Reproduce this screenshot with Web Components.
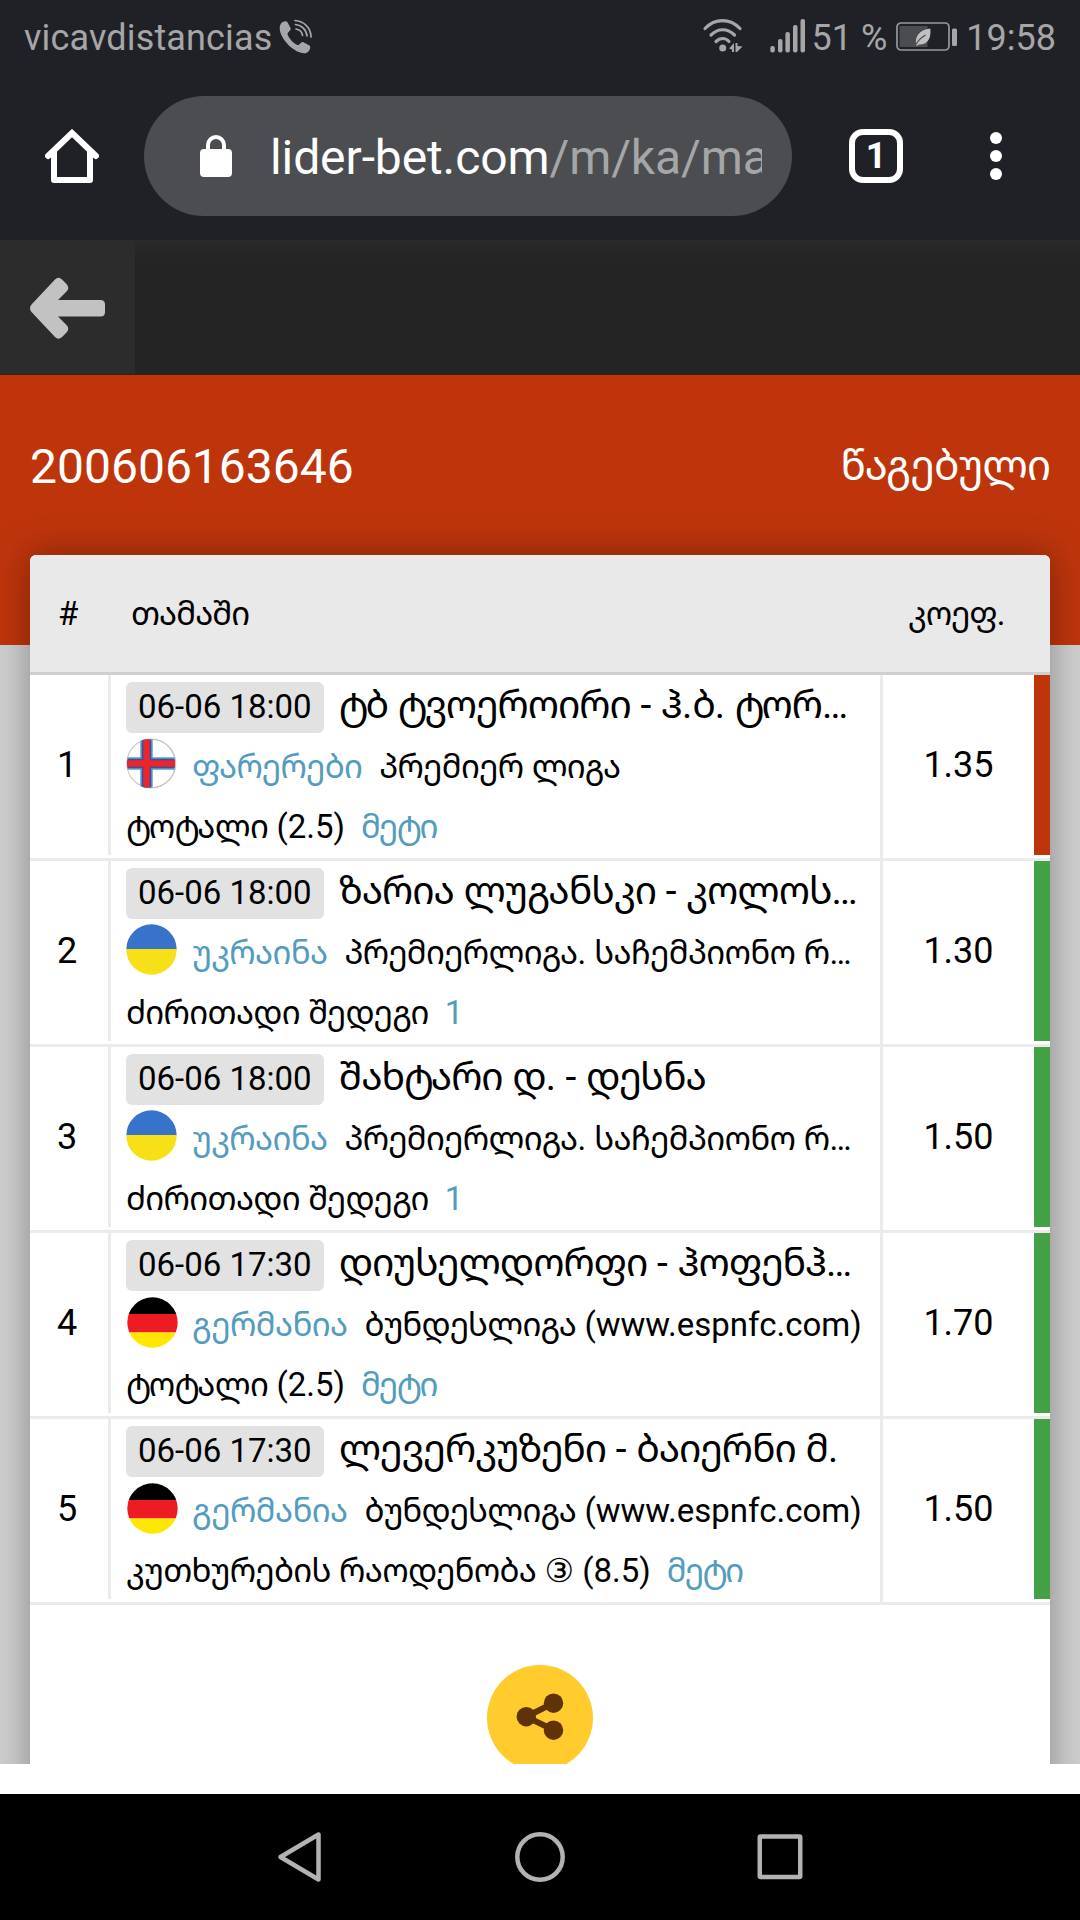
<!DOCTYPE html>
<html lang="ka">
<head>
  <meta charset="utf-8">
  <title>200606163646</title>
  <style>
    html, body {
      margin: 0;
      padding: 0;
    }

    body {
      background: #ffffff;
      color: #000000;
      display: flex;
      flex-direction: column;
      font-family: Roboto, 'Noto Sans Georgian', 'DejaVu Sans', sans-serif;
      font-size: 33px;
      height: 1920px;
      overflow: hidden;
      width: 1080px;
    }
  </style>
</head>
<body>
  <phone-status carrier="vicavdistancias" battery="51 %" time="19:58"></phone-status>
  <browser-bar host="lider-bet.com" path="/m/ka/ma" tabs="1"></browser-bar>
  <bet-page>
    <bet-back></bet-back>
    <bet-banner number="200606163646" status="წაგებული"></bet-banner>
    <bet-card index="#" game="თამაში" odds="კოეფ.">
      <bet-row number="1" time="06-06 18:00" game="ტბ ტვოეროირი - ჰ.ბ. ტორ…" flag="fo" country="ფარერები" league="პრემიერ ლიგა" market="ტოტალი (2.5)" pick="მეტი" odds="1.35" result="lost"></bet-row>
      <bet-row number="2" time="06-06 18:00" game="ზარია ლუგანსკი - კოლოს…" flag="ua" country="უკრაინა" league="პრემიერლიგა. საჩემპიონო რ…" market="ძირითადი შედეგი" pick="1" odds="1.30" result="won"></bet-row>
      <bet-row number="3" time="06-06 18:00" game="შახტარი დ. - დესნა" flag="ua" country="უკრაინა" league="პრემიერლიგა. საჩემპიონო რ…" market="ძირითადი შედეგი" pick="1" odds="1.50" result="won"></bet-row>
      <bet-row number="4" time="06-06 17:30" game="დიუსელდორფი - ჰოფენჰ…" flag="de" country="გერმანია" league="ბუნდესლიგა (www.espnfc.com)" market="ტოტალი (2.5)" pick="მეტი" odds="1.70" result="won"></bet-row>
      <bet-row number="5" time="06-06 17:30" game="ლევერკუზენი - ბაიერნი მ." flag="de" country="გერმანია" league="ბუნდესლიგა (www.espnfc.com)" market="კუთხურების რაოდენობა ③ (8.5)" pick="მეტი" odds="1.50" result="won"></bet-row>
      <bet-share slot="footer"></bet-share>
    </bet-card>
  </bet-page>
  <phone-nav></phone-nav>

  <script>
    // Shared set up
    // Markup goes into an open root, attributes fill the parts
    class BetElement extends HTMLElement {
      constructor( markup ) {
        super();

        const template = document.createElement( 'template' );
        template.innerHTML = `
          <style>
            i {
              font-style: normal;
              letter-spacing: var( --tracking, -0.021em );
            }

            i b {
              font-weight: 400;
              letter-spacing: -0.080em;
            }
          </style>
        ` + markup;

        this.attachShadow( {mode: 'open'} );
        this.shadowRoot.appendChild( template.content.cloneNode( true ) );
      }

      // Georgian runs are set tighter than the Latin ones
      // The wide letter "ტ" tighter still
      connectedCallback() {
        this.shadowRoot.querySelectorAll( '[data-attr]' ).forEach( ( element ) => {
          element.innerHTML = this.getAttribute( element.dataset.attr )
            .replace( /[\u10d0-\u10ff]+/g, '<i>$&</i>' )
            .replace( /ტ/g, '<b>$&</b>' );
        } );
      }
    }

    // Status bar
    class PhoneStatus extends BetElement {
      constructor() {
        super( /* template */ `
          <style>
            :host {
              align-items: flex-start;
              background: #202126;
              box-sizing: border-box;
              color: #a6a6a8;
              display: flex;
              flex: none;
              font-size: 36px;
              height: 84px;
              line-height: 42px;
              padding: 17px 24px 0 24px;
              white-space: pre;
            }

            svg { display: block; flex: none; }
            .carrier { letter-spacing: 0.150px; }
            .phone { margin: 2px 0 0 6px; }
            .wifi { margin: 2px 0 0 auto; }
            .signal { margin: 2px 6px 0 26px; }
            .battery { margin: 4px 8px 0 9px; }
          </style>
          <span class="carrier" data-attr="carrier"></span>
          <svg class="phone" width="36" height="36" viewBox="0 0 36 36">
            <path fill="#a6a6a8" d="M3 4.500 C5 2.500 8 1.500 9.500 3.200 L12.500 9 C13.500 11.500 9.500 13 9.500 15 C10.500 19 15.500 24.500 19.500 26 C22 26.500 22.500 22.500 25 23 L31.500 26.500 C33.500 28.500 31 33 28 34.200 C22 35.500 12 29 7 22 C2.500 16 0 9 3 4.500 Z"/>
            <g fill="none" stroke="#a6a6a8" stroke-width="1.700" stroke-linecap="round">
              <path d="M18 10 C21.500 10.500 24 13 24.500 16.500"/>
              <path d="M17.500 5.500 C23.500 6 28.500 11 29 17"/>
              <path d="M17 1.500 C26 2 33 9 33 18"/>
            </g>
          </svg>
          <svg class="wifi" width="42" height="36" viewBox="0 0 42 36">
            <g fill="none" stroke="#a6a6a8" stroke-width="3.200" stroke-linecap="round">
              <path d="M3 9.500 C13 -1 28 -1 38 9.500"/>
              <path d="M9 16 C16 9 25.500 9 32.500 16"/>
              <path d="M14 22.500 C18 18.500 23.500 18.500 27 22.500"/>
            </g>
            <circle cx="20.700" cy="29" r="3.500" fill="#a6a6a8"/>
            <path fill="#a6a6a8" d="M27 29.500 L32 24 V33 H30 V30.500 Z M33.500 24 H35.500 V27 L40.500 27.500 L35 33 H33.500 Z"/>
          </svg>
          <svg class="signal" width="36" height="36" viewBox="0 0 36 36" fill="#a6a6a8">
            <rect x="0.300" y="27" width="4.500" height="6.500" rx="2"/>
            <rect x="8" y="20" width="4.500" height="13.500" rx="2"/>
            <rect x="15.400" y="13" width="4.500" height="20.500" rx="2"/>
            <rect x="23" y="6" width="4.500" height="27.500" rx="2"/>
            <rect x="30.500" y="0" width="4.500" height="33.500" rx="2"/>
          </svg>
          <span data-attr="battery"></span>
          <svg class="battery" width="62" height="32" viewBox="0 0 62 32">
            <rect x="1" y="2" width="52" height="27" rx="4" fill="none" stroke="#98989a" stroke-width="1.700"/>
            <rect x="3.500" y="5" width="28" height="21" fill="#4b4c50"/>
            <path fill="#c0c0c1" d="M34.300 7.500 C35.500 18 31 24 23 23.500 L20.500 25 C18 16 23 9 34.300 7.500 Z"/>
            <path fill="none" stroke="#4b4c50" stroke-width="1.200" d="M20 23.500 C23 18 26 16 29.500 14"/>
            <rect x="56" y="7.500" width="5" height="17.500" rx="1.500" fill="#a6a6a8"/>
          </svg>
          <span data-attr="time"></span>
        ` );
      }
    }

    // Address bar
    class BrowserBar extends BetElement {
      constructor() {
        super( /* template */ `
          <style>
            :host {
              align-items: center;
              background: #202126;
              box-sizing: border-box;
              color: #ffffff;
              display: flex;
              flex: none;
              height: 156px;
              padding: 0 78px 12px 45px;
            }

            svg { display: block; flex: none; }

            .address {
              align-items: center;
              background: #4c4d50;
              border-radius: 60px;
              box-sizing: border-box;
              display: flex;
              flex: none;
              gap: 38px;
              height: 120px;
              margin: 0 57px 0 45px;
              padding: 0 30px 0 56px;
              width: 648px;
            }

            .url {
              flex: 1;
              font-size: 48px;
              letter-spacing: -0.100px;
              line-height: 60px;
              overflow: hidden;
              padding: 3px 0 0 0;
              white-space: nowrap;
            }

            .path { color: #a5a6a8; }

            .tabs {
              align-items: center;
              border: solid 6px #ffffff;
              border-radius: 14px;
              box-sizing: border-box;
              display: flex;
              flex: none;
              font-size: 36px;
              font-weight: 700;
              height: 54px;
              justify-content: center;
              line-height: 42px;
              margin: 0 87px 0 0;
              width: 54px;
            }
          </style>
          <svg width="54" height="54" viewBox="0 0 54 54" fill="none" stroke="#ffffff" stroke-width="6" stroke-linecap="round" stroke-linejoin="round">
            <path stroke-linejoin="miter" d="M3 27 L27 4 L51 27"/>
            <path d="M9 24 V51 H45 V24"/>
          </svg>
          <div class="address">
            <svg width="32" height="42" viewBox="0 0 32 42">
              <rect x="0" y="14" width="32" height="28" rx="4" fill="#ffffff"/>
              <path d="M8 16 V10 A8 8 0 0 1 24 10 V16" fill="none" stroke="#ffffff" stroke-width="4"/>
            </svg>
            <div class="url"><span data-attr="host"></span><span class="path" data-attr="path"></span></div>
          </div>
          <div class="tabs" data-attr="tabs"></div>
          <svg width="12" height="48" viewBox="0 0 12 48" fill="#ffffff">
            <circle cx="6" cy="6" r="6"/>
            <circle cx="6" cy="24" r="6"/>
            <circle cx="6" cy="42" r="6"/>
          </svg>
        ` );
      }
    }

    // Scrolled content between the two bars
    class BetPage extends BetElement {
      constructor() {
        super( /* template */ `
          <style>
            :host {
              background: #cfcfcf;
              display: flex;
              flex: none;
              flex-direction: column;
              height: 1524px;
              overflow: hidden;
            }
          </style>
          <slot></slot>
        ` );
      }
    }

    class BetBack extends BetElement {
      constructor() {
        super( /* template */ `
          <style>
            :host {
              background: linear-gradient( #292929, #242424 20px );
              border-bottom: solid 1px #3b1d13;
              box-sizing: border-box;
              display: flex;
              flex: none;
              height: 135px;
            }

            div {
              align-items: center;
              background: #2c2c2c;
              display: flex;
              justify-content: center;
              width: 135px;
            }

            svg { display: block; margin: 2px 0 0 0; }
          </style>
          <div>
            <svg width="76" height="62" viewBox="0 0 76 62" fill="#c2c2c2">
              <path d="M1.500 27.500 L25 2.500 Q28.500 -1 32 2.500 L36.500 7 Q40 11 36.500 14.500 L28 23 H70.500 Q75 23 75 27.500 V35 Q75 39.500 70.500 39.500 H28 L36.500 48 Q40 51.500 36.500 55.500 L32 60 Q28.500 63.500 25 60 L1.500 35 Q-1.500 31 1.500 27.500 Z"/>
            </svg>
          </div>
        ` );
      }
    }

    class BetBanner extends BetElement {
      constructor() {
        super( /* template */ `
          <style>
            :host {
              align-items: flex-start;
              background: #be350c;
              box-sizing: border-box;
              color: #ffffff;
              display: flex;
              flex: none;
              font-size: 48px;
              height: 270px;
              justify-content: space-between;
              line-height: 183px;
              padding: 0 30px 0 30px;
            }

            .status {
              font-size: 42px;
              line-height: 181px;
              --tracking: -0.025em;
            }
          </style>
          <span data-attr="number"></span>
          <span class="status" data-attr="status"></span>
        ` );
      }
    }

    class BetCard extends BetElement {
      constructor() {
        super( /* template */ `
          <style>
            :host {
              background: #ffffff;
              border-radius: 6px;
              box-shadow: 0 0 36px rgba( 0, 0, 0, 0.350 );
              display: flex;
              flex: none;
              flex-direction: column;
              height: 1290px;
              margin: -90px 30px 0 30px;
            }

            header {
              background: #e9e9e9;
              border-bottom: solid 3px #cfcfcf;
              border-radius: 6px 6px 0 0;
              display: grid;
              flex: none;
              grid-template-columns: 101px 1fr 171px;
              line-height: 117px;
              --tracking: -0.030em;
            }

            header span:first-child { padding: 0 0 0 28px; }
            header span:last-child { padding: 0 0 0 29px; }

            footer {
              display: flex;
              justify-content: center;
              padding: 60px 0 0 0;
            }
          </style>
          <header><span data-attr="index"></span><span data-attr="game"></span><span data-attr="odds"></span></header>
          <slot></slot>
          <footer><slot name="footer"></slot></footer>
        ` );
      }
    }

    // Round flags
    const FLAGS = {
      fo: `
        <circle cx="25" cy="25.500" r="24.500" fill="#ffffff" stroke="#c4c4c4" stroke-width="1.500"/>
        <path stroke="#5aa0d6" stroke-width="12.500" d="M20.500 1.500 V49.500 M1.500 25.500 H48.500"/>
        <path stroke="#3b4f9a" stroke-width="9.500" d="M20.500 1.500 V49.500 M1.500 25.500 H48.500"/>
        <path stroke="#e8262b" stroke-width="6.500" d="M20.500 1.500 V49.500 M1 25.500 H49"/>`,
      ua: `
        <rect width="51" height="25" fill="#3873cb"/>
        <rect y="25" width="51" height="26" fill="#f7e017"/>`,
      de: `
        <rect width="51" height="17" fill="#000000"/>
        <rect y="17" width="51" height="18.500" fill="#ed1c24"/>
        <rect y="35.500" width="51" height="15.500" fill="#ffe600"/>`
    };

    class BetRow extends BetElement {
      constructor() {
        super( /* template */ `
          <style>
            :host {
              border-bottom: solid 3px #ebebeb;
              display: grid;
              flex: none;
              grid-template-columns: 78px 1fr 154px 16px;
              height: 183px;
              line-height: 60px;
              white-space: nowrap;
            }

            .number,
            .odds {
              font-size: 36px;
              line-height: 180px;
              text-align: center;
            }

            .number { padding: 0 4px 0 0; }

            .match {
              border-left: solid 3px #ebebeb;
              box-sizing: border-box;
              display: grid;
              grid-template-rows: 63px 59px 58px;
              height: 180px;
              min-width: 0;
              padding: 0 0 0 15px;
            }

            .odds {
              border-left: solid 3px #ebebeb;
              height: 183px;
            }

            .strip {
              background: #43a047;
              height: 180px;
            }
            :host( [result=lost] ) .strip { background: #be350c; }

            .line { display: flex; }
            .line:first-child { align-items: baseline; padding: 7px 0 0 0; }
            .line:nth-child( 2 ) { line-height: 57px; }

            .time {
              background: #e2e2e2;
              border-radius: 6px;
              height: 51px;
              line-height: 49px;
              margin: 0 15px 0 0;
              padding: 0 12px 0 12px;
            }

            .game {
              font-size: 39px;
              line-height: 45px;
              --tracking: -0.028em;
            }

            svg {
              display: block;
              flex: none;
              margin: 0 15px 0 0;
            }
            :host( [flag=de] ) svg { transform: translate( 1px, 1px ); }

            .country { margin: 0 17px 0 0; }
            .market { margin: 0 16px 0 0; }

            .country,
            .pick {
              color: #539cbe;
            }

            .pick { --tracking: -0.045em; }
          </style>
          <div class="number" data-attr="number"></div>
          <div class="match">
            <div class="line"><span class="time" data-attr="time"></span><span class="game" data-attr="game"></span></div>
            <div class="line">
              <svg width="51" height="51" viewBox="0 0 51 51">
                <clipPath id="round"><circle cx="25.500" cy="25.500" r="25.200"/></clipPath>
                <g clip-path="url(#round)"></g>
              </svg>
              <span class="country" data-attr="country"></span><span data-attr="league"></span>
            </div>
            <div class="line"><span class="market" data-attr="market"></span><span class="pick" data-attr="pick"></span></div>
          </div>
          <div class="odds" data-attr="odds"></div>
          <div class="strip"></div>
        ` );
      }

      connectedCallback() {
        super.connectedCallback();
        this.shadowRoot.querySelector( 'g' ).innerHTML = FLAGS[this.getAttribute( 'flag' )];
      }
    }

    class BetShare extends BetElement {
      constructor() {
        super( /* template */ `
          <style>
            :host {
              background: #ffcb2d;
              border-radius: 50%;
              display: block;
              height: 106px;
              width: 106px;
            }

            svg { display: block; }
          </style>
          <svg width="106" height="106" viewBox="0 0 106 106" fill="#5f3305">
            <path d="M66.500 38 L39.300 51.700 L66.500 65" fill="none" stroke="#5f3305" stroke-width="6"/>
            <circle cx="39.300" cy="51.700" r="9.700"/>
            <circle cx="66.500" cy="38.200" r="9.700"/>
            <circle cx="66.500" cy="65.200" r="9.700"/>
          </svg>
        ` );
      }
    }

    // Back, home, recents
    class PhoneNav extends BetElement {
      constructor() {
        super( /* template */ `
          <style>
            :host {
              align-items: center;
              background: #000000;
              box-sizing: border-box;
              display: flex;
              flex: none;
              height: 126px;
              justify-content: center;
              gap: 190px;
              margin: 30px 0 0 0;
            }

            svg {
              display: block;
              fill: none;
              stroke: #b2b2b2;
              stroke-linejoin: round;
              stroke-width: 4.500px;
            }
          </style>
          <svg width="50" height="52" viewBox="0 0 50 52"><path d="M43.500 3.500 V48.500 L5.500 26 Z"/></svg>
          <svg width="50" height="52" viewBox="0 0 50 52"><circle cx="25" cy="26" r="22.700"/></svg>
          <svg width="50" height="52" viewBox="0 0 50 52"><rect x="4.750" y="5.500" width="40.500" height="40.500" rx="1"/></svg>
        ` );
      }
    }

    window.customElements.define( 'phone-status', PhoneStatus );
    window.customElements.define( 'browser-bar', BrowserBar );
    window.customElements.define( 'bet-page', BetPage );
    window.customElements.define( 'bet-back', BetBack );
    window.customElements.define( 'bet-banner', BetBanner );
    window.customElements.define( 'bet-card', BetCard );
    window.customElements.define( 'bet-row', BetRow );
    window.customElements.define( 'bet-share', BetShare );
    window.customElements.define( 'phone-nav', PhoneNav );
  </script>
</body>
</html>
